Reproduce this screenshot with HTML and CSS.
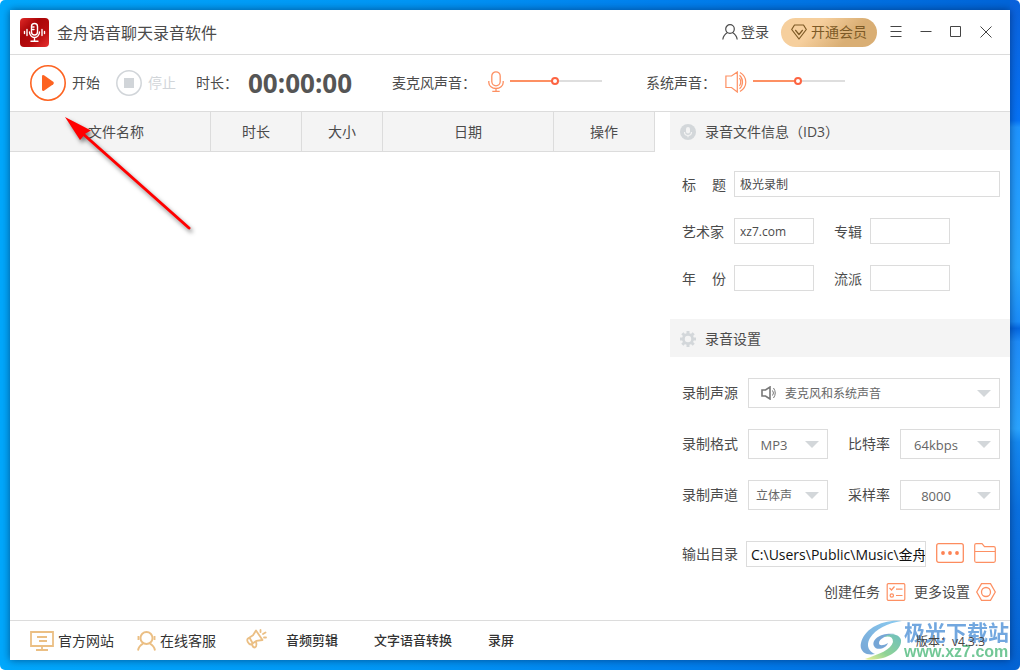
FILE: index.html
```
<!DOCTYPE html>
<html lang="zh-CN">
<head>
<meta charset="utf-8">
<meta name="viewport" content="width=device-width, initial-scale=1">
<title>金舟语音聊天录音软件</title>
<link rel="stylesheet" href="styles.css">
</head>
<body>
<div class="window">
  <header class="titlebar">
    <svg class="app-logo" width="29" height="29" viewBox="0 0 29 29" aria-hidden="true">
      <defs>
        <linearGradient id="logo-red" x1="0" y1="0" x2="1" y2="1">
          <stop offset="0" stop-color="#e02a28"/><stop offset=".35" stop-color="#a90508"/><stop offset=".65" stop-color="#b80c0e"/><stop offset="1" stop-color="#e83030"/>
        </linearGradient>
      </defs>
      <rect width="29" height="29" rx="4" fill="url(#logo-red)"/>
      <g fill="none" stroke="#fff" stroke-width="1.400" stroke-linecap="round">
        <rect x="11.500" y="5.500" width="6" height="11.500" rx="3"/>
        <path d="M9.500 14a5 5.500 0 0 0 10 0M14.500 19.500v3.500M11 23.300h7M12.500 9h1.500M12.500 11.500h1.500M7 11.500v6M4.500 13.500v2M22 11.500v6M24.500 13.500v2"/>
      </g>
    </svg>
    <h1 class="app-name">金舟语音聊天录音软件</h1>
    <button class="login" type="button">
      <svg width="16" height="16" viewBox="0 0 16 16" fill="none" stroke="currentColor" stroke-width="1.200" aria-hidden="true"><circle cx="8" cy="5" r="4.300"/><path d="M.8 15.500C1.300 12 3.500 9.800 5.500 8.600M10.500 8.600c2 1.200 4.200 3.400 4.700 6.900"/></svg>
      登录
    </button>
    <button class="vip" type="button">
      <svg width="16" height="16" viewBox="0 0 16 16" fill="none" stroke="currentColor" stroke-width="1.200" stroke-linejoin="round" aria-hidden="true"><path d="M3.500 1h9L15.300 5.500 8 15 .7 5.500zM4.300 6 8 10.500 11.700 6"/></svg>
      开通会员
    </button>
    <div class="window-controls">
      <button class="control" type="button" aria-label="菜单"><svg width="12" height="12" viewBox="0 0 12 12" stroke="currentColor"><path d="M.5.5h11M.5 5.500h11M.5 10.500h11"/></svg></button>
      <button class="control" type="button" aria-label="最小化"><svg width="12" height="12" viewBox="0 0 12 12" stroke="currentColor"><path d="M.5 5.500h11"/></svg></button>
      <button class="control" type="button" aria-label="最大化"><svg width="12" height="12" viewBox="0 0 12 12" fill="none" stroke="currentColor"><path d="M.5.500h10v10H.5z"/></svg></button>
      <button class="control" type="button" aria-label="关闭"><svg width="12" height="12" viewBox="0 0 12 12" stroke="currentColor"><path d="m.5.500 11 11M11.500.500l-11 11"/></svg></button>
    </div>
  </header>

  <section class="toolbar">
    <button class="record" type="button">
      <svg width="36" height="36" viewBox="0 0 36 36" aria-hidden="true"><circle cx="18" cy="18" r="17.200" fill="none" stroke="#fd6321" stroke-width="1.600"/><path d="M12 11.500q0-2 2-1.200l9.200 6.400q1.500 1.300 0 2.600L14 25.700q-2 .8-2-1.200z" fill="#fd6321"/></svg>
      开始
    </button>
    <button class="record stop" type="button" disabled>
      <svg width="26" height="26" viewBox="0 0 26 26" aria-hidden="true"><circle cx="13" cy="13" r="12.200" fill="none" stroke="#d1d5d9" stroke-width="1.500"/><path d="M8 8h10v10H8z" fill="#d1d5d9"/></svg>
      停止
    </button>
    <span class="duration-label">时长：</span>
    <output class="timer">00:00:00</output>
    <div class="volume mic-volume">
      <label for="mic">麦克风声音：</label>
      <svg width="16" height="22" viewBox="0 0 16 22" fill="none" stroke="#fd9063" stroke-width="1.300" aria-hidden="true"><rect x="3.800" y=".8" width="8.400" height="14" rx="4.200"/><path d="M.8 10v1.500a7.200 6 0 0 0 14.400 0V10M8 17.500v2.700M4.300 20.300h7.400"/></svg>
      <input class="slider" id="mic" type="range" min="0" max="100" value="49">
    </div>
    <div class="volume system-volume">
      <label for="system">系统声音：</label>
      <svg width="22" height="22" viewBox="0 0 22 22" fill="none" stroke="#fd9063" stroke-width="1.200" aria-hidden="true"><path d="M.9 5h5.600l5.800-4v20l-5.800-4.500H.9zM14.500 7q2.500 4 0 8M14.500 4.200q3 2.500 3 6.800t-3 6.800M15 1.500q5.800 3.500 5.800 9.500T15 20.500"/></svg>
      <input class="slider" id="system" type="range" min="0" max="100" value="49">
    </div>
  </section>

  <main class="content">
    <div class="recordings">
      <table class="files">
        <colgroup><col><col class="col-time"><col class="col-size"><col class="col-date"><col class="col-action"></colgroup>
        <thead><tr><th class="name-head" scope="col">文件名称</th><th scope="col">时长</th><th scope="col">大小</th><th scope="col">日期</th><th scope="col">操作</th></tr></thead>
      </table>
    </div>

    <aside class="panel">
      <h2 class="panel-title">
        <svg width="16" height="16" viewBox="0 0 16 16" aria-hidden="true"><circle cx="8" cy="8" r="8" fill="#d3d7da"/><rect x="6" y="3" width="4" height="6.500" rx="2" fill="#f4f4f4"/><path d="M4.500 8a3.500 3.500 0 0 0 7 0M8 11.500V13.300" fill="none" stroke="#f4f4f4" stroke-width="1.200"/></svg>
        录音文件信息（ID3）
      </h2>
      <form class="form info">
        <div class="row">
          <label class="label spread" for="title"><span>标</span><span>题</span></label>
          <input class="field grow" id="title" type="text" value="极光录制">
        </div>
        <div class="row">
          <label class="label" for="artist">艺术家</label>
          <input class="field short" id="artist" type="text" value="xz7.com">
          <label class="second-label" for="album">专辑</label>
          <input class="field short" id="album" type="text">
        </div>
        <div class="row">
          <label class="label spread" for="year"><span>年</span><span>份</span></label>
          <input class="field short" id="year" type="text">
          <label class="second-label" for="genre">流派</label>
          <input class="field short" id="genre" type="text">
        </div>
      </form>

      <h2 class="panel-title">
        <svg width="16" height="16" viewBox="0 0 16 16" aria-hidden="true"><g fill="none" stroke="#d3d7da"><circle cx="8" cy="8" r="4.600" stroke-width="2.800"/><path d="M8 0v3M8 13v3M0 8h3M13 8h3M2.300 2.300l2.200 2.200M11.500 11.500l2.200 2.200M13.700 2.300l-2.200 2.200M4.500 11.500l-2.200 2.200" stroke-width="3"/></g></svg>
        录音设置
      </h2>
      <form class="form settings">
        <div class="row">
          <label for="source">录制声源</label>
          <span class="select grow">
            <svg class="source-icon" width="16" height="14" viewBox="0 0 16 14" fill="none" stroke="#777" stroke-width="1.600" aria-hidden="true"><path d="M1 4h3.500L9 1v12l-4.500-3H1z"/><path d="M11.500 4.500q2 2.500 0 5M12.500 2q3.500 5 0 10" stroke-width="1"/></svg>
            <select class="source" id="source"><option>麦克风和系统声音</option></select>
          </span>
        </div>
        <div class="row">
          <label for="format">录制格式</label>
          <span class="select small"><select id="format"><option>MP3</option></select></span>
          <label class="third-label" for="bitrate">比特率</label>
          <span class="select grow"><select id="bitrate"><option>64kbps</option></select></span>
        </div>
        <div class="row">
          <label for="channel">录制声道</label>
          <span class="select small"><select class="han" id="channel"><option>立体声</option></select></span>
          <label class="third-label" for="rate">采样率</label>
          <span class="select grow"><select id="rate"><option>8000</option></select></span>
        </div>
        <div class="row output-row">
          <label for="folder">输出目录</label>
          <input class="field path grow" id="folder" type="text" value="C:\Users\Public\Music\金舟语音聊天录音软件">
          <button class="icon-button" type="button" aria-label="浏览"><svg width="28" height="20" viewBox="0 0 28 20"><rect x=".7" y=".7" width="26.600" height="18.600" rx="2" fill="none" stroke="#fd8c5e" stroke-width="1.300"/><g fill="#fd8254"><circle cx="7" cy="10" r="1.900"/><circle cx="14" cy="10" r="1.900"/><circle cx="21" cy="10" r="1.900"/></g></svg></button>
          <button class="icon-button" type="button" aria-label="打开文件夹"><svg width="22" height="20" viewBox="0 0 22 20" fill="none" stroke="#fd9063" stroke-width="1.200"><path d="M.7 2.200Q.7.700 2.200.7H8l2.500 3h9.300q1.500 0 1.500 1.500v12.600q0 1.500-1.500 1.500H2.200q-1.500 0-1.500-1.500zM1 8.500h20.500"/></svg></button>
        </div>
        <div class="actions">
          <button class="action" type="button">创建任务 <svg width="20" height="18" viewBox="0 0 20 18" fill="none" stroke="#fd9063" stroke-width="1.200"><rect x="1.200" y=".7" width="17.600" height="16.600" rx="1"/><path d="m3.500 5 2 2 3-3.500M10 6.200h6.500M10 12.500h6.500"/><circle cx="5.800" cy="12.500" r="1.700"/></svg></button>
          <button class="action" type="button">更多设置 <svg width="20" height="18" viewBox="0 0 20 18" fill="none" stroke="#fd9063" stroke-width="1.300"><path d="M5.500.7h9L19.300 9l-4.800 8.300h-9L.7 9z"/><circle cx="10" cy="9" r="4.500"/></svg></button>
        </div>
      </form>
    </aside>
  </main>

  <footer class="footer">
    <a class="foot-link" href="#site"><svg width="24" height="20" viewBox="0 0 24 20" fill="none" stroke="#ebbf84" stroke-width="1.800" aria-hidden="true"><path d="M1 1h22v14H1zM12 15v4M6 19h12M7 6h10M9 10h8"/></svg>官方网站</a>
    <a class="foot-link support" href="#support"><svg width="19" height="20" viewBox="0 0 19 20" fill="none" stroke="#ebbf84" stroke-width="1.900" aria-hidden="true"><circle cx="9.500" cy="7" r="6"/><path d="M1.500 5v4M17.500 5v4M1 19.500q.8-4.500 5-6.800M18 19.500q-.8-4.500-5-6.800"/></svg>在线客服</a>
    <svg class="horn" width="21" height="20" viewBox="0 0 21 20" fill="none" stroke="#ebbf84" stroke-width="1.800" stroke-linejoin="round" stroke-linecap="round" aria-hidden="true"><path d="m10 1.500 6.500 9.500-6 .8L5 15.500q-2-.2-3.200-2.500T2 9.500l5-3.200zM6 15q.5 3.500 3 3.500 2-.8 1.200-5M4 9.500l2.500 4.500M14.500 1v2M19.500 3.500 17 5M18 8.500h2"/></svg>
    <a class="product" href="#edit">音频剪辑</a>
    <a class="product" href="#convert">文字语音转换</a>
    <a class="product" href="#screen">录屏</a>
    <span class="version">版本：v4.3.3</span>
  </footer>

  <div class="watermark">
    <svg width="44" height="40" viewBox="0 0 44 40" aria-hidden="true">
      <defs>
        <linearGradient id="mark-blue" x1="1" y1="0" x2="0" y2="1"><stop offset="0" stop-color="#6fc0ee"/><stop offset="1" stop-color="#5590cc"/></linearGradient>
        <linearGradient id="mark-green" x1="1" y1="0" x2="0" y2="1"><stop offset="0" stop-color="#4aafb0"/><stop offset=".6" stop-color="#74c97c"/><stop offset="1" stop-color="#edf07a"/></linearGradient>
      </defs>
      <path d="M42 1C22-1 4 9 1 23c-2 8 5 13 14 11C8 31 6 25 10 18 16 9 27 3 42 1z" fill="url(#mark-blue)"/>
      <path d="M35 14C22 12 11 19 14 26c2 5 12 3 14-3-5 3-9 3-9 0 0-4 7-8 16-9z" fill="#5590cc"/>
      <path d="M24 17q9-2 9 5c-2 8-14 12-28 17 2 1 8 1 13 0 14-2 24-11 23-19-1-6-11-8-17-3z" fill="url(#mark-green)"/>
    </svg>
    <div class="watermark-text"><strong>极光下载站</strong><span>www.xz7.com</span></div>
  </div>
</div>

<svg class="pointer" width="150" height="130" viewBox="0 0 150 130" aria-hidden="true"><path d="m32 22 107 95" stroke="red" stroke-width="3" stroke-linecap="round"/><path d="M15 6 41 19.500 35.500 22.500 31 28 30 29z" fill="red"/></svg>
</body>
</html>
```
FILE: styles.css
```
* { box-sizing: border-box; }

html { background: #fff; }

body {
  margin: 0;
  min-height: 100vh;
  padding: 10px;
  display: flex;
  border-radius: 5px;
  color: #4b4b4b;
  font: 14px/20px "Open Sans", "Noto Sans CJK SC", sans-serif;
  background:
    linear-gradient(#0a62dc, #0672f5 18%, #1e94ff 19%, #2aa8ff 40%, #1a8cf8 48%, #0567e0 49%, #1e8cf8 51%, #2aa4ff 64%, #1488f0 66%, #0a70e0 76%, #0564d4) right / 10px 100% no-repeat,
    linear-gradient(90deg, #00a8fc 0%, #0096f5 40%, #0080ee 65%, #0064d8 100%);
}

button, input, select { font: inherit; color: inherit; }
button { padding: 0; border: 0; background: none; cursor: pointer; white-space: nowrap; }
a { color: inherit; text-decoration: none; }
svg { flex: none; display: block; }
h1, h2 { margin: 0; font-weight: 400; }

.window {
  position: relative;
  flex: 1;
  min-width: 0;
  display: flex;
  flex-direction: column;
  background: #fff;
  box-shadow: 0 0 8px rgba(0, 20, 60, .55);
}

.titlebar {
  display: flex;
  align-items: center;
  height: 45px;
  padding: 0 18px 0 10px;
  border-bottom: 1px solid #dcdcdc;
}
.app-name { flex: 1; margin-left: 8px; padding-top: 2px; font-size: 16px; line-height: 24px; }
.login { display: flex; align-items: center; gap: 3px; }
.vip {
  display: flex;
  align-items: center;
  gap: 4px;
  height: 29px;
  margin: 0 13px 0 12px;
  padding: 0 10px;
  border-radius: 15px;
  color: #7d5a26;
  background: linear-gradient(135deg, #f6cf9d 35%, #d9ae74 70%);
}
.window-controls { display: flex; gap: 18px; }
.control { color: #444; }

.toolbar {
  display: flex;
  align-items: center;
  height: 57px;
  padding: 0 20px;
  border-bottom: 1px solid #dcdcdc;
}
.record { display: flex; align-items: center; gap: 6px; }
.stop { margin-left: 16px; color: #d1d5d9; }
.duration-label { width: 52px; margin-left: 20px; white-space: nowrap; }
.timer { color: #555; font-size: 26px; font-weight: 700; line-height: 36px; }
.volume { display: flex; align-items: center; }
.volume label { width: 96px; white-space: nowrap; }
.mic-volume { margin-left: 40px; }
.system-volume { margin-left: 44px; }
.system-volume label { width: 79px; }
.volume svg { margin-bottom: 2px; }
.slider {
  appearance: none;
  width: 92px;
  height: 8px;
  margin: 0 0 4px 6px;
  background: linear-gradient(90deg, #fd9063 49%, #dedede 49%) center / 100% 2px no-repeat;
}
.slider::-webkit-slider-thumb {
  appearance: none;
  width: 8px;
  height: 8px;
  border: 2px solid #fd6442;
  border-radius: 50%;
  background: #fff;
}

.content {
  flex: 1;
  display: grid;
  grid-template-columns: minmax(0, 1fr) 340px;
  gap: 15px;
}
.files { width: 100%; border-collapse: separate; border-spacing: 0; table-layout: fixed; }
.files th {
  height: 40px;
  padding: 0;
  border: solid #dcdcdc;
  border-width: 0 1px 1px 0;
  background: #f4f4f4;
  font-weight: 400;
}
.files .name-head { padding-left: 12px; }
.col-time { width: 91px; }
.col-size { width: 81px; }
.col-date { width: 171px; }
.col-action { width: 101px; }

.panel-title {
  display: flex;
  align-items: center;
  gap: 9px;
  height: 38px;
  padding: 2px 0 0 10px;
  background: #f4f4f4;
  font-size: 14px;
}
.form { display: grid; gap: 21px; padding: 21px 10px 0 12px; }
.info { padding-bottom: 28px; }
.row { display: flex; align-items: center; }
.label { width: 44px; margin-right: 8px; }
.info label { padding-top: 2px; }
.spread { display: flex; justify-content: space-between; }
.field {
  height: 26px;
  min-width: 0;
  padding: 0 0 0 5px;
  border: 1px solid #dcdcdc;
  border-radius: 0;
  background: #fff;
  font-size: 12px;
}
.short { width: 80px; }
.grow { flex: 1; }
.second-label { margin: 0 8px 0 20px; }

.select { position: relative; display: flex; height: 30px; margin-left: 10px; }
.small { flex: none; width: 80px; }
.select select {
  appearance: none;
  width: 100%;
  padding: 2px 28px 0 0;
  border: 1px solid #dcdcdc;
  border-radius: 0;
  background: #fff;
  color: #666;
  font-size: 13px;
  text-align: center;
  text-align-last: center;
}
.select .han { font-size: 12px; }
.select .source { padding-left: 36px; font-size: 12px; text-align: left; text-align-last: left; }
.select::after {
  content: "";
  position: absolute;
  top: 12px;
  right: 9px;
  border: solid transparent;
  border-width: 7px 7px 0;
  border-top-color: #d3d7da;
  pointer-events: none;
}
.source-icon { position: absolute; top: 8px; left: 13px; }
.third-label { margin-left: 20px; }

.output-row { margin-top: 10px; }
.path { margin-left: 8px; padding-left: 4px; color: #111; font-size: 14px; }
.icon-button { margin: 0 0 2px 10px; }
.icon-button:last-child { margin-right: 4px; }
.actions { display: flex; justify-content: flex-end; gap: 8px; padding-right: 4px; margin-top: -6px; }
.action { display: flex; align-items: center; gap: 6px; }

.footer {
  display: flex;
  align-items: center;
  height: 40px;
  padding: 0 25px 0 20px;
  border-top: 1px solid #dcdcdc;
  color: #333;
}
.foot-link { display: flex; align-items: center; gap: 4px; }
.support { margin-left: 23px; }
.horn { margin: 0 19px 4px 30px; }
.product { margin-right: 36px; padding-bottom: 2px; font-size: 13px; font-weight: 500; }
.version { z-index: 1; margin-left: auto; padding-top: 3px; color: #444; font-size: 12px; }

.watermark {
  position: absolute;
  right: 1px;
  bottom: 0;
  display: flex;
  opacity: .8;
  pointer-events: none;
}
.watermark-text { display: flex; flex-direction: column; }
.watermark-text strong { color: #4f92d8; font-size: 21px; line-height: 24px; }
.watermark-text span { color: #4fba7c; font: 700 16px/16px "Liberation Sans", sans-serif; }

.pointer {
  position: absolute;
  top: 111px;
  left: 50px;
  pointer-events: none;
  filter: drop-shadow(2px 3px 2px rgba(0, 0, 0, .5));
}
```
